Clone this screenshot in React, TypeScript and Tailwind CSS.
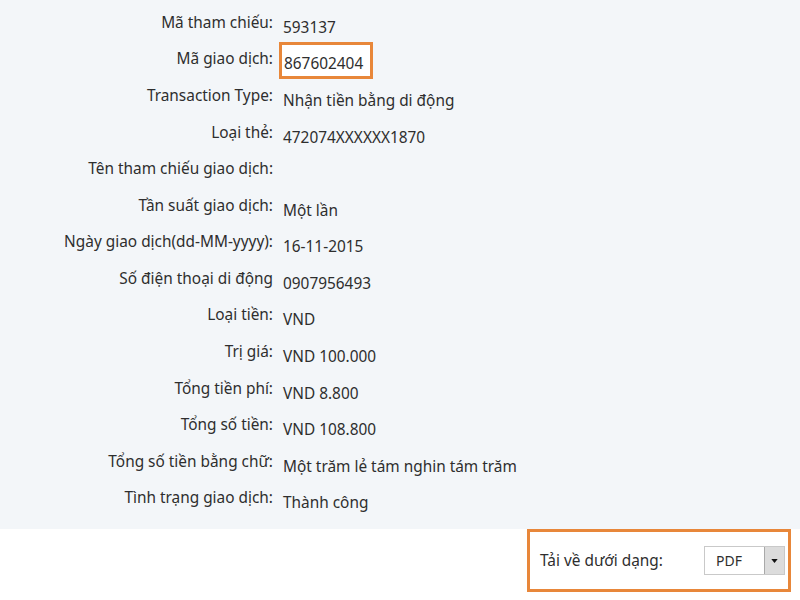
type Row = {
  label: string;
  value?: string;
  boxed?: boolean;
};

const ROWS: Row[] = [
  { label: "Mã tham chiếu:", value: "593137" },
  { label: "Mã giao dịch:", value: "867602404", boxed: true },
  { label: "Transaction Type:", value: "Nhận tiền bằng di động" },
  { label: "Loại thẻ:", value: "472074XXXXXX1870" },
  { label: "Tên tham chiếu giao dịch:" },
  { label: "Tần suất giao dịch:", value: "Một lần" },
  { label: "Ngày giao dịch(dd-MM-yyyy):", value: "16-11-2015" },
  { label: "Số điện thoại di động", value: "0907956493" },
  { label: "Loại tiền:", value: "VND" },
  { label: "Trị giá:", value: "VND 100.000" },
  { label: "Tổng tiền phí:", value: "VND 8.800" },
  { label: "Tổng số tiền:", value: "VND 108.800" },
  { label: "Tổng số tiền bằng chữ:", value: "Một trăm lẻ tám nghin tám trăm" },
  { label: "Tình trạng giao dịch:", value: "Thành công" },
];

export default function App() {
  return (
    <div
      className="w-[800px] h-[600px] bg-white text-[#2e2e2e] text-[15.4px] overflow-hidden"
      style={{ fontFamily: '"Noto Sans", "Open Sans", sans-serif' }}
    >
      {/* details panel */}
      <div className="h-[529px] bg-[#f3f6f9] pt-[4px]">
        {ROWS.map((row) => (
          <div key={row.label} className="flex h-[36.6px] items-center">
            <div className="w-[273px] shrink-0 text-right">{row.label}</div>
            {row.boxed ? (
              <div className="ml-[6px] mt-[3px] flex h-[37px] w-[94px] items-center border-[3px] border-[#e8873a] bg-white pl-[2px] pt-[7px]">
                {row.value}
              </div>
            ) : (
              <div className="ml-[10px] mt-[10px]">{row.value}</div>
            )}
          </div>
        ))}
      </div>

      {/* download */}
      <div className="flex justify-end pr-[9px]">
        <div className="flex h-[63px] w-[264px] items-center border-[3px] border-[#e8873a] pl-[10px] pr-[3px]">
          <span>Tải về dưới dạng:</span>
          <div className="ml-auto flex h-[29px] w-[81px] items-stretch border border-[#c9c9c9] bg-white">
            <span className="flex flex-1 items-center pl-[11px] text-[14px]">PDF</span>
            <span className="flex w-[20px] items-center justify-center border-l border-[#a9a9a9] bg-[#dcdcdc]">
              <svg viewBox="0 0 8 5" className="h-[4px] w-[7px]">
                <path d="M0 0h8L4 5z" fill="#111" />
              </svg>
            </span>
          </div>
        </div>
      </div>
    </div>
  );
}
